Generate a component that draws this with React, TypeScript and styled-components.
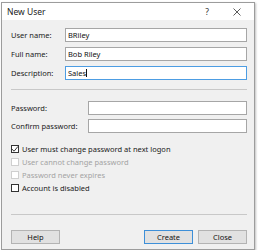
import styled, { createGlobalStyle } from "styled-components";

const GlobalStyle = createGlobalStyle`
  body {
    margin: 0;
    background: #ffffff;
    font-family: "Noto Sans", "Open Sans", sans-serif;
  }
`;

type FieldType = {
  label: string;
  value?: string;
  focused?: boolean;
};

type CheckType = {
  label: string;
  checked?: boolean;
  disabled?: boolean;
};

const nameFields: FieldType[] = [
  { label: "User name:", value: "BRiley" },
  { label: "Full name:", value: "Bob Riley" },
  { label: "Description:", value: "Sales", focused: true },
];

const passwordFields: FieldType[] = [
  { label: "Password:" },
  { label: "Confirm password:" },
];

const checks: CheckType[] = [
  { label: "User must change password at next logon", checked: true },
  { label: "User cannot change password", disabled: true },
  { label: "Password never expires", disabled: true },
  { label: "Account is disabled" },
];

const Check = (props: CheckType) => {
  return (
    <CheckRow $disabled={props.disabled}>
      <Box $disabled={props.disabled}>
        {props.checked && (
          <svg width="8" height="8" viewBox="0 0 8 8">
            <path d="M1 4.2 L3.1 6.2 L7 1.4" fill="none" stroke="#222" strokeWidth="0.9" />
          </svg>
        )}
      </Box>
      <span>{props.label}</span>
    </CheckRow>
  );
};

export default function App() {
  return (
    <>
      <GlobalStyle />
      <Dialog>
        <TitleBar>
          <Title>New User</Title>
          <HelpMark>?</HelpMark>
          <CloseIcon width="8" height="8" viewBox="0 0 8 8">
            <path d="M0.5 0.5 L7.5 7.5 M7.5 0.5 L0.5 7.5" stroke="#333" strokeWidth="0.8" />
          </CloseIcon>
        </TitleBar>
        <Body>
          <Fields $gap={5} $labelWidth={54}>
            {nameFields.map((f) => (
              <FieldRow key={f.label}>
                <Label>{f.label}</Label>
                <Input $focused={f.focused}>
                  {f.value}
                  {f.focused && <Caret />}
                </Input>
              </FieldRow>
            ))}
          </Fields>
          <Separator $top={9} />
          <Fields $gap={4} $labelWidth={77}>
            {passwordFields.map((f) => (
              <FieldRow key={f.label}>
                <Label>{f.label}</Label>
                <Input />
              </FieldRow>
            ))}
          </Fields>
          <Checks>
            {checks.map((c) => (
              <Check key={c.label} {...c} />
            ))}
          </Checks>
          <Separator $top={20} />
          <Buttons>
            <Button>Help</Button>
            <Spacer />
            <Button $primary>Create</Button>
            <Button>Close</Button>
          </Buttons>
        </Body>
      </Dialog>
    </>
  );
}

const Dialog = styled.div`
  margin: 2px 0 0 1px;
  width: 252px;
  border: 1px solid #9c9c9c;
  box-shadow: 1px 1px 2px rgba(0, 0, 0, 0.25);
  background: #f0f0f0;
`;

const TitleBar = styled.div`
  height: 17px;
  background: #ffffff;
  display: flex;
  align-items: center;
  padding: 0 0 0 5px;
`;

const Title = styled.div`
  flex: 1;
  font-size: 8.5px;
  color: #222;
`;

const HelpMark = styled.span`
  font-size: 8.5px;
  color: #333;
  margin-right: 24px;
`;

const CloseIcon = styled.svg`
  margin-right: 13px;
`;

const Body = styled.div`
  padding: 8px 7px 5px 9px;
  display: flex;
  flex-direction: column;
  font-size: 7.5px;
  color: #1a1a1a;
`;

const Fields = styled.div<{ $gap: number; $labelWidth: number }>`
  display: flex;
  flex-direction: column;
  gap: ${(p) => p.$gap}px;

  & > div {
    grid-template-columns: ${(p) => p.$labelWidth}px 1fr;
  }
`;

const FieldRow = styled.div`
  display: grid;
  align-items: center;
`;

const Label = styled.span`
  white-space: nowrap;
`;

const Input = styled.div<{ $focused?: boolean }>`
  height: 12px;
  border: 1px solid ${(p) => (p.$focused ? "#4d9de3" : "#a6a6a6")};
  background: #ffffff;
  display: flex;
  align-items: center;
  padding-left: 2px;
  font-size: 7.5px;
  color: #111;
`;

const Caret = styled.span`
  width: 1px;
  height: 8px;
  background: #111;
`;

const Separator = styled.div<{ $top: number }>`
  height: 1px;
  background: #c8c8c8;
  margin-top: ${(p) => p.$top}px;
  margin-bottom: 11px;
`;

const Checks = styled.div`
  margin-top: 9px;
  display: flex;
  flex-direction: column;
`;

const CheckRow = styled.label<{ $disabled?: boolean }>`
  height: 13px;
  display: flex;
  align-items: center;
  gap: 3px;
  color: ${(p) => (p.$disabled ? "#a3a3a3" : "#1a1a1a")};
  white-space: nowrap;
`;

const Box = styled.span<{ $disabled?: boolean }>`
  width: 6px;
  height: 6px;
  border: 1px solid ${(p) => (p.$disabled ? "#cfcfcf" : "#333")};
  background: #ffffff;
  display: flex;
  align-items: center;
  justify-content: center;

  svg {
    flex: none;
  }
`;

const Buttons = styled.div`
  margin-top: 4px;
  display: flex;
  gap: 5px;
`;

const Spacer = styled.div`
  flex: 1;
`;

const Button = styled.button<{ $primary?: boolean }>`
  width: 49px;
  height: 14px;
  padding: 0;
  font-family: inherit;
  font-size: 7.5px;
  color: #111;
  background: #e1e1e1;
  border: 1px solid ${(p) => (p.$primary ? "#3d8fd8" : "#b3b3b3")};
`;
